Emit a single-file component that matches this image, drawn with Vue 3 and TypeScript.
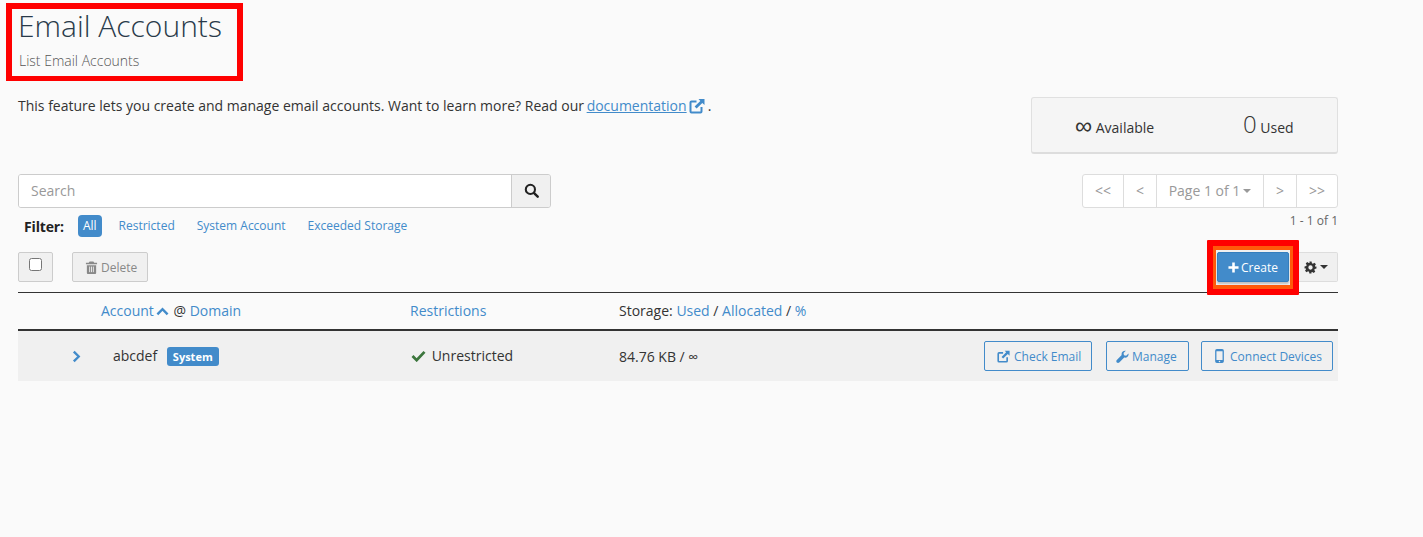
<script setup lang="ts">
const filters = [
  { label: 'All', active: true },
  { label: 'Restricted', active: false },
  { label: 'System Account', active: false },
  { label: 'Exceeded Storage', active: false }
]
</script>

<template>
  <div class="page">
    <div class="title-box">
      <h1>Email Accounts</h1>
      <p class="subtitle">List Email Accounts</p>
    </div>

    <div class="intro">
      <p>
        This feature lets you create and manage email accounts. Want to learn more? Read our
        <a href="#">documentation</a>
        <svg class="ext" viewBox="0 0 16 16" width="16" height="16">
          <path fill="none" stroke="currentColor" stroke-width="2" d="M7.5 3.5H2.5a1 1 0 0 0-1 1v9a1 1 0 0 0 1 1h9a1 1 0 0 0 1-1V9" />
          <path fill="currentColor" d="M9.5 1H15.5V7L13.3 4.9 7.6 10.6 5.6 8.6 11.3 2.9Z" />
        </svg>
        <span class="dot">.</span>
      </p>
      <div class="stats">
        <div class="stat"><span class="inf">∞</span> Available</div>
        <div class="stat"><span class="num">0</span> Used</div>
      </div>
    </div>

    <div class="search-row">
      <div class="search">
        <input type="text" placeholder="Search" />
        <button class="search-btn" type="button">
          <svg viewBox="0 0 16 16" width="15" height="15">
            <circle cx="6.8" cy="6.8" r="4.9" fill="none" stroke="#222" stroke-width="2.2" />
            <path d="M10.5 10.5L14.6 14.6" stroke="#222" stroke-width="2.6" stroke-linecap="round" />
          </svg>
        </button>
      </div>
      <div class="pager">
        <span class="pg pg-first">&lt;&lt;</span>
        <span class="pg pg-prev">&lt;</span>
        <span class="pg pg-mid">Page 1 of 1<i class="caret"></i></span>
        <span class="pg pg-prev">&gt;</span>
        <span class="pg pg-last">&gt;&gt;</span>
      </div>
    </div>

    <div class="filter-row">
      <div class="filters">
        <strong>Filter:</strong>
        <span v-for="f in filters" :key="f.label" class="filter" :class="{ active: f.active }">{{ f.label }}</span>
      </div>
      <span class="count">1 - 1 of 1</span>
    </div>

    <div class="toolbar">
      <div class="tool-left">
        <label class="check-btn"><input type="checkbox" /></label>
        <button class="delete" type="button">
          <svg viewBox="0 0 14 14" width="13" height="13">
            <path fill="#888" d="M5 0.5h4l1 1.5h3v1.5H1V2h3ZM2 4.5h10V13a1 1 0 0 1-1 1H3a1 1 0 0 1-1-1Z" />
            <path stroke="#eee" stroke-width="1" d="M5 6v6M7 6v6M9 6v6" />
          </svg>
          Delete
        </button>
      </div>
      <div class="tool-right">
        <div class="mark">
          <div class="mark-inner">
            <button class="create" type="button">
              <svg viewBox="0 0 12 12" width="11" height="11">
                <path fill="#fff" d="M4.6 0.5h2.8v4.1h4.1v2.8H7.4v4.1H4.6V7.4H0.5V4.6h4.1Z" />
              </svg>
              Create
            </button>
          </div>
        </div>
        <button class="gear" type="button">
          <svg viewBox="0 0 24 24" width="13" height="13">
            <path fill="#333" fill-rule="evenodd" d="M10 1h4l.6 3.2 1.9.8 2.7-1.8 2.8 2.8-1.8 2.7.8 1.9L23 10v4l-3.2.6-.8 1.9 1.8 2.7-2.8 2.8-2.7-1.8-1.9.8L13.900 23h-4l-.6-3.200-1.900-.8-2.700 1.800-2.800-2.800 1.800-2.700-.8-1.900L1 14v-4l3.200-.6.8-1.900-1.800-2.700 2.800-2.800 2.700 1.800 1.900-.8ZM12 8a4 4 0 1 0 0 8 4 4 0 0 0 0-8Z" />
          </svg>
          <i class="caret dark"></i>
        </button>
      </div>
    </div>

    <div class="table">
      <div class="thead">
        <div class="c-acc">
          <a>Account</a>
          <svg class="sort" viewBox="0 0 14 9" width="13" height="9">
            <path fill="none" stroke="#428bca" stroke-width="2.6" d="M1.5 7.500L7 2l5.500 5.500" />
          </svg>
          @ <a>Domain</a>
        </div>
        <div class="c-res"><a>Restrictions</a></div>
        <div class="c-sto">Storage: <a>Used</a> / <a>Allocated</a> / <a>%</a></div>
      </div>
      <div class="row">
        <div class="c-exp">
          <svg viewBox="0 0 10 14" width="9" height="13">
            <path fill="none" stroke="#428bca" stroke-width="2.6" d="M2 1.500L7.500 7 2 12.500" />
          </svg>
        </div>
        <div class="c-name">abcdef <span class="badge">System</span></div>
        <div class="c-res c-res-row">
          <svg class="tick" viewBox="0 0 16 13" width="15" height="12">
            <path fill="none" stroke="#3c763d" stroke-width="3" d="M1.500 6.500L6 11 14.500 2" />
          </svg>
          Unrestricted
        </div>
        <div class="c-usage">84.76 KB / ∞</div>
        <div class="actions">
          <button class="act act-check" type="button">
            <svg viewBox="0 0 16 16" width="13" height="13">
              <path fill="none" stroke="currentColor" stroke-width="2" d="M7.500 3.500H2.500a1 1 0 0 0-1 1v9a1 1 0 0 0 1 1h9a1 1 0 0 0 1-1V9" />
              <path fill="currentColor" d="M9.500 1H15.500V7L13.300 4.900 7.600 10.600 5.600 8.600 11.300 2.900Z" />
            </svg>
            Check Email
          </button>
          <button class="act act-manage" type="button">
            <svg viewBox="0 0 16 16" width="13" height="13">
              <path fill="currentColor" d="M15.400 4.200c.3 1.500-.1 3-1.200 4.100-1.100 1.100-2.700 1.400-4.100 1L4 15.300c-.8.8-2.200.8-3 0s-.8-2.100 0-2.900l6-6.100c-.4-1.400-.1-3 1-4.100C9.100 1.100 10.700.7 12.100 1L9.300 3.800l.5 2.700 2.700.5Z" />
            </svg>
            Manage
          </button>
          <button class="act act-connect" type="button">
            <svg viewBox="0 0 10 16" width="9" height="14">
              <path fill="currentColor" fill-rule="evenodd" d="M2 0h6a2 2 0 0 1 2 2v12a2 2 0 0 1-2 2H2a2 2 0 0 1-2-2V2a2 2 0 0 1 2-2ZM1.500 2.500v10h7v-10ZM5 13.300a.9.9 0 1 0 0 1.800.9.9 0 0 0 0-1.800Z" />
            </svg>
            Connect Devices
          </button>
        </div>
      </div>
    </div>
  </div>
</template>

<style scoped>
.page {
  width: 1320px;
  padding: 3px 0 0 18px;
  font-family: "Open Sans", sans-serif;
  font-size: 14px;
  color: #333;
}

.title-box {
  width: 218px;
  height: 67px;
  margin-left: -12px;
  padding-left: 7px;
  border: 6px solid #f00;
  border-bottom-width: 5px;
  box-sizing: content-box;
}

h1 {
  margin: -1px 0 0 -1px;
  font-size: 30px;
  font-weight: 300;
  line-height: 36px;
  color: #293a4a;
}

.subtitle {
  margin: 7px 0 0;
  font-size: 14px;
  font-weight: 300;
  line-height: 19px;
  color: #555;
}

.intro {
  display: flex;
  justify-content: space-between;
  margin-top: 16px;
}

.intro p {
  margin: -1px 0 0;
  line-height: 20px;
  white-space: nowrap;
}

a {
  color: #428bca;
}

.intro a {
  margin-left: -1px;
  text-decoration: underline;
}

.ext {
  margin-left: 2px;
  color: #428bca;
  vertical-align: -3px;
}

.dot {
  margin-left: 3px;
}

.stats {
  display: flex;
  align-items: center;
  width: 307px;
  height: 57px;
  box-sizing: border-box;
  border: 1px solid #e0e0e0;
  border-bottom: 2px solid #ddd;
  border-radius: 3px;
  background: #f5f5f5;
}

.stat {
  flex: 0 0 auto;
  line-height: 30px;
}

.stat:first-child {
  width: 168px;
  margin-top: 6px;
  padding-left: 43px;
  box-sizing: border-box;
}

.stat:last-child {
  margin-top: 2px;
  margin-left: 43px;
}

.inf {
  font-family: "Liberation Sans", sans-serif;
  font-size: 24px;
  line-height: 20px;
  vertical-align: -1px;
}

.num {
  font-size: 24px;
  font-weight: 300;
  vertical-align: 0;
}

.search-row {
  display: flex;
  justify-content: space-between;
  margin-top: 20px;
}

.search {
  display: flex;
  width: 533px;
  height: 34px;
  box-sizing: border-box;
  border: 1px solid #ccc;
  border-radius: 3px;
  overflow: hidden;
}

.search input {
  flex: 1;
  min-width: 0;
  border: 0;
  padding: 0 12px 2px;
  background: #fff;
  font: 14px "Open Sans", sans-serif;
  outline: none;
}

.search input::placeholder {
  color: #999;
}

.search-btn {
  width: 39px;
  padding: 0 0 2px;
  border: 0;
  border-left: 1px solid #ccc;
  background: #f0f0f0;
  display: flex;
  align-items: center;
  justify-content: center;
}

.pager {
  display: flex;
  height: 34px;
  box-sizing: border-box;
  border: 1px solid #ddd;
  border-radius: 3px;
  background: #fff;
  color: #999;
}

.pg {
  display: flex;
  align-items: center;
  justify-content: center;
  padding-bottom: 1px;
  border-left: 1px solid #ddd;
  box-sizing: border-box;
}

.pg:first-child {
  border-left: 0;
}

.pg-first {
  width: 40px;
}

.pg-prev {
  width: 33px;
}

.pg-mid {
  width: 107px;
}

.pg-last {
  width: 41px;
}

.caret {
  display: inline-block;
  width: 0;
  height: 0;
  margin-left: 3px;
  border-top: 4px solid #999;
  border-left: 4px solid transparent;
  border-right: 4px solid transparent;
}

.caret.dark {
  margin-left: 2px;
  border-top-color: #333;
}

.filter-row {
  display: flex;
  justify-content: space-between;
  margin-top: 4px;
}

.filters {
  display: flex;
  align-items: center;
  height: 24px;
  margin-top: 2px;
  padding-left: 6px;
}

.filters strong {
  margin-right: 14px;
  font-weight: 700;
  letter-spacing: -0.15px;
  color: #222;
}

.filter {
  margin-left: 22px;
  padding: 2px 0;
  font-size: 12px;
  line-height: 18px;
  color: #428bca;
}

.filter.active {
  margin-left: 0;
  margin-right: -5px;
  padding: 2px 5px;
  border-radius: 4px;
  background: #428bca;
  color: #fff;
}

.count {
  font-size: 12px;
  line-height: 17px;
  color: #666;
}

.toolbar {
  display: flex;
  justify-content: space-between;
  margin-top: 14px;
}

.tool-left,
.tool-right {
  display: flex;
  height: 30px;
}

.check-btn {
  display: flex;
  justify-content: center;
  width: 35px;
  box-sizing: border-box;
  border: 1px solid #ccc;
  border-radius: 2px;
  background: #f0f0f0;
}

.check-btn input {
  width: 13px;
  height: 13px;
  margin: 5px 0 0;
}

.delete {
  display: flex;
  align-items: center;
  gap: 3px;
  width: 76px;
  margin-left: 19px;
  padding: 0 0 0 12px;
  border: 1px solid #ccc;
  border-radius: 2px;
  background: #f0f0f0;
  color: #888;
  font: 12px "Open Sans", sans-serif;
}

.mark {
  margin: -12px 0 -13px;
  border: 6px solid #f00;
  border-radius: 1px;
}

.mark-inner {
  height: 100%;
  padding: 2px 1px 0;
  border: solid #ff5a0a;
  border-width: 4px 3px;
  box-sizing: border-box;
  background: #f0f0f0;
}

.create {
  display: flex;
  align-items: center;
  justify-content: center;
  gap: 2px;
  width: 72px;
  height: 30px;
  padding: 0;
  border: 1px solid #357ebd;
  border-radius: 2px;
  background: #428bca;
  color: #fff;
  font: 12px "Open Sans", sans-serif;
  box-shadow: 0 2px 2px rgba(0, 0, 0, 0.2);
}

.gear {
  display: flex;
  align-items: center;
  justify-content: center;
  gap: 1px;
  width: 39px;
  padding: 0 5px 0 0;
  border: 1px solid #ddd;
  border-left: 0;
  border-radius: 0 2px 2px 0;
  background: #f0f0f0;
}

.table {
  margin-top: 10px;
}

.thead {
  display: flex;
  align-items: center;
  height: 39px;
  padding-bottom: 2px;
  box-sizing: border-box;
  border-top: 1px solid #333;
  border-bottom: 2px solid #333;
}

.thead .c-acc {
  width: 309px;
  margin-left: 83px;
  white-space: nowrap;
}

.sort {
  margin: 0 1px 0 2px;
}

.c-res {
  width: 209px;
  flex: 0 0 auto;
  white-space: nowrap;
}

.c-res-row {
  margin-top: -2px;
}

.tick {
  margin-left: 1px;
  margin-right: 2px;
  vertical-align: -1px;
}

.row {
  display: flex;
  align-items: center;
  height: 50px;
  background: #f0f0f0;
}

.c-exp {
  display: flex;
  width: 95px;
  padding-left: 54px;
  box-sizing: border-box;
}

.c-name {
  width: 297px;
  white-space: nowrap;
}

.badge {
  display: inline-block;
  margin-left: 6px;
  padding: 0 6px;
  border-radius: 3px;
  background: #428bca;
  color: #fff;
  font-size: 11px;
  font-weight: 700;
  line-height: 19px;
}

.c-usage {
  width: 160px;
}

.actions {
  display: flex;
  flex: 1;
  justify-content: flex-end;
  padding-right: 5px;
}

.act {
  display: flex;
  align-items: center;
  height: 30px;
  padding: 0;
  border: 1px solid #428bca;
  border-radius: 2px;
  background: transparent;
  color: #428bca;
  font: 12px "Open Sans", sans-serif;
}

.act-check {
  width: 108px;
  padding-left: 12px;
  gap: 4px;
}

.act-manage {
  width: 83px;
  margin-left: 14px;
  padding-left: 9px;
  gap: 3px;
}

.act-connect {
  width: 132px;
  margin-left: 12px;
  padding-left: 13px;
  gap: 6px;
}
</style>

<style>
body {
  background: #fafafa;
}
</style>
